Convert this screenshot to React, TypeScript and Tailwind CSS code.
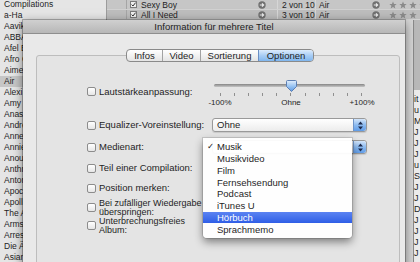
import React from "react";

const artists = [
  "Compilations",
  "a-Ha",
  "Aavikko",
  "ABBA",
  "Afel Bocoum",
  "Afro Celt Sound System",
  "Aimee Mann",
  "Air",
  "Alexi Murdoch",
  "Amy Macdonald",
  "Anastacia",
  "Andrea Bocelli",
  "Anne Clark",
  "Annie Lennox",
  "Anouk",
  "Anthrax",
  "Antony and the Johnsons",
  "Apocalyptica",
  "Apollo 440",
  "The Arcade Fire",
  "Arms and Sleepers",
  "Arrested Development",
  "Die Ärzte",
  "Asian Dub Foundation",
];

const menuItems = ["Musik", "Musikvideo", "Film", "Fernsehsendung", "Podcast", "iTunes U", "Hörbuch", "Sprachmemo"];
const sideLetters = ["it", "u", "M", "J", "J", "J", "u", "S", "J", "J", "D", "J", "J", "J", "J"];

function Checkbox() {
  return (
    <span className="block w-[9px] h-[9px] shrink-0 rounded-[2px] border border-[#8c8c8c] bg-gradient-to-b from-white to-[#e6e6e6]" />
  );
}

function SmallCheck() {
  return (
    <svg width="7" height="7" viewBox="0 0 7 7">
      <rect x="0.5" y="0.5" width="6" height="6" fill="#eeeeee" stroke="#7a7a7a" />
      <path d="M1.6 3.6 3 5 5.6 1.6" stroke="#333" strokeWidth="1" fill="none" />
    </svg>
  );
}

function GoArrow() {
  return (
    <svg width="8" height="8" viewBox="0 0 8 8" className="shrink-0">
      <circle cx="4" cy="4" r="3.7" fill="#707070" />
      <path d="M1.8 4h3.8M4 2.3 5.7 4 4 5.7" stroke="#ececec" strokeWidth="1.1" fill="none" />
    </svg>
  );
}

function Star() {
  return (
    <svg width="8" height="8" viewBox="0 0 10 10" className="shrink-0">
      <polygon points="5,0.5 6.3,3.6 9.6,3.8 7,6 7.9,9.4 5,7.5 2.1,9.4 3,6 0.4,3.8 3.7,3.6" fill="#8a8a8a" />
    </svg>
  );
}

function TrackRow({ name, num, stars, bg }: { name: string; num: string; stars: number; bg: string }) {
  return (
    <div className={`flex h-[10px] items-center text-[8.5px] leading-[10px] border-b border-[#d2d2d2] ${bg}`}>
      <div className="w-[20px] h-full border-r border-[#a5a5a5]" />
      <div className="w-[12px] flex justify-center">
        <SmallCheck />
      </div>
      <div className="w-[138px] flex items-center justify-between pl-[2px] pr-[11px]">
        <span>{name}</span>
        <GoArrow />
      </div>
      <div className="w-[38px] h-full border-l border-[#d6d6d6] pl-[4px]">{num}</div>
      <div className="w-[72px] h-full flex items-center justify-between border-l border-[#d6d6d6] pl-[3px] pr-[7px]">
        <span>Air</span>
        <GoArrow />
      </div>
      <div className="flex gap-[2px] pl-[2px]">
        {Array.from({ length: stars }).map((_, i) => (
          <Star key={i} />
        ))}
      </div>
    </div>
  );
}

function Stepper() {
  return (
    <div className="w-[13px] h-full flex items-center justify-center rounded-r-[3px] border-l border-[#6f94c8] bg-gradient-to-b from-[#d3e5fa] via-[#8dbbf0] to-[#5f9ce8]">
      <svg width="5" height="9" viewBox="0 0 5 9">
        <path d="M2.5 0.5 5 3.6H0z M0 5.4h5L2.5 8.5z" fill="#1c2a4c" />
      </svg>
    </div>
  );
}

function Popup({ value }: { value: string }) {
  return (
    <div className="w-[155px] h-[14px] flex items-center rounded-[3px] border border-[#999] bg-gradient-to-b from-white to-[#ececec] shadow-[0_1px_1px_rgba(0,0,0,0.12)]">
      <span className="flex-1 pl-[4px] leading-[12px]">{value}</span>
      <Stepper />
    </div>
  );
}

const tabs = [
  { label: "Infos", cls: "w-[35px]" },
  { label: "Video", cls: "w-[38px] border-l border-[#a2a2a2]" },
  { label: "Sortierung", cls: "w-[58px] border-l border-[#a2a2a2]" },
  {
    label: "Optionen",
    cls: "w-[55px] border-l border-[#6b8fc4] bg-gradient-to-b from-[#dcebfc] via-[#a8cdf5] to-[#80b6ee]",
  },
];

export default function App() {
  return (
    <div className="relative w-[420px] h-[262px] overflow-hidden bg-[#e4e4e4] font-['Liberation_Sans',Arial,sans-serif] text-[#1e1e1e]">
      {/* iTunes window behind */}
      <div className="flex h-full">
        <div className="w-[107px] shrink-0 border-r border-[#9c9c9c] bg-[#e5e5e5] overflow-hidden">
          <div className="-mt-[1px]">
            {artists.map((a) => (
              <div
                key={a}
                className={`h-[11px] pl-[4px] text-[8.5px] leading-[11px] whitespace-nowrap ${a === "Air" ? "bg-[#c6c6c6]" : ""}`}
              >
                {a}
              </div>
            ))}
          </div>
        </div>
        <div className="flex-1 flex flex-col bg-[#c4c4c4]">
          <TrackRow name="Sexy Boy" num="2 von 10" stars={5} bg="bg-[#c6c6c6]" />
          <TrackRow name="All I Need" num="3 von 10" stars={3} bg="bg-[#bdbdbd]" />
          <div className="flex-1 flex">
            <div className="w-[297px] bg-[#cfcfcf]" />
            <div className="w-[10px] bg-[#d6d6d6] border-r border-[#8a8a8a]" />
            <div className="flex-1 flex flex-col bg-[#ececec]">
              <div className="h-[70px] bg-[#b9b9b9]" />
              <div className="pt-[4px] text-[9px] leading-[11px] whitespace-nowrap">
                {sideLetters.map((l, i) => (
                  <div key={i} className="h-[11px]">
                    {l}
                  </div>
                ))}
              </div>
            </div>
          </div>
        </div>
      </div>

      {/* dialog window */}
      <div className="absolute left-[23px] top-[20px] w-[382px] h-[250px] bg-[#e9e9e9] shadow-[0_0_0_1px_rgba(0,0,0,0.25),0_3px_10px_rgba(0,0,0,0.5)] text-[9.5px]">
        <div className="h-[14px] bg-gradient-to-b from-[#d0d0d0] to-[#b7b7b7] border-b border-[#8e8e8e] text-center leading-[13px] text-[#222]">
          Information für mehrere Titel
        </div>
        <div className="pt-[15px]">
          <div className="relative z-10 ml-[13px] w-[364px] flex justify-center pl-[4px]">
            <div className="flex h-[13px] rounded-[4px] border border-[#8a8a8a] overflow-hidden bg-gradient-to-b from-white to-[#e4e4e4]">
              {tabs.map((t) => (
                <div key={t.label} className={`${t.cls} text-center leading-[11px]`}>
                  {t.label}
                </div>
              ))}
            </div>
          </div>
          <div className="-mt-[7px] ml-[13px] w-[364px] h-[220px] border border-[#bdbdbd] rounded-[3px] bg-[#e4e4e4] pt-[22px] pl-[50px]">
            {/* Lautstärke */}
            <div className="flex h-[36px]">
              <div className="w-[125px] h-[9px] mt-[9px] flex items-center gap-[3px]">
                <Checkbox />
                <span className="leading-[9px] whitespace-nowrap">Lautstärkeanpassung:</span>
              </div>
              <div className="w-[155px]">
                <div className="relative mt-[6px] mx-[2px] h-[3px] rounded-full bg-gradient-to-b from-[#858585] to-[#c6c6c6]">
                  <svg className="absolute left-[72px] -top-[4px]" width="11" height="12" viewBox="0 0 11 12">
                    <defs>
                      <linearGradient id="knob" x1="0" y1="0" x2="0" y2="1">
                        <stop offset="0" stopColor="#e2eefc" />
                        <stop offset="0.5" stopColor="#9cc6f3" />
                        <stop offset="1" stopColor="#5b98e2" />
                      </linearGradient>
                    </defs>
                    <path d="M1.5 0.5h8a1 1 0 0 1 1 1v5L5.5 11.5 0.5 6.5v-5a1 1 0 0 1 1-1z" fill="url(#knob)" stroke="#5d7fb3" />
                  </svg>
                </div>
                <div className="mt-[6px] h-[3px] flex justify-between pl-[8px] pr-[5px]">
                  {Array.from({ length: 11 }).map((_, i) => (
                    <span key={i} className="w-[1px] h-[3px] bg-[#8f8f8f]" />
                  ))}
                </div>
                <div className="mt-[2px] -ml-[7px] w-[172px] flex justify-between text-[8px] leading-[10px]">
                  <span className="w-[30px] text-center">-100%</span>
                  <span className="w-[30px] text-center">Ohne</span>
                  <span className="w-[30px] text-center">+100%</span>
                </div>
              </div>
            </div>

            {/* Equalizer */}
            <div className="mt-[4px] h-[14px] flex items-center">
              <div className="w-[125px] flex items-center gap-[3px]">
                <Checkbox />
                <span className="whitespace-nowrap">Equalizer-Voreinstellung:</span>
              </div>
              <Popup value="Ohne" />
            </div>

            {/* Medienart */}
            <div className="mt-[8px] h-[14px] flex items-center">
              <div className="w-[125px] flex items-center gap-[3px]">
                <Checkbox />
                <span className="whitespace-nowrap">Medienart:</span>
              </div>
              <Popup value="Musik" />
            </div>

            <div className="mt-[7px] h-[14px] flex items-center gap-[3px]">
              <Checkbox />
              <span className="whitespace-nowrap">Teil einer Compilation:</span>
            </div>

            <div className="mt-[6px] h-[14px] flex items-center gap-[3px]">
              <Checkbox />
              <span className="whitespace-nowrap">Position merken:</span>
            </div>

            <div className="mt-[3.5px] h-[18px] flex items-center gap-[3px]">
              <Checkbox />
              <span className="text-[9px] leading-[9px] whitespace-nowrap">
                Bei zufälliger Wiedergabe
                <br />
                überspringen:
              </span>
            </div>

            <div className="h-[18px] flex items-center gap-[3px]">
              <Checkbox />
              <span className="text-[9px] leading-[9px] whitespace-nowrap">
                Unterbrechungsfreies
                <br />
                Album:
              </span>
            </div>
          </div>
        </div>
      </div>

      {/* open pop-up menu */}
      <div className="absolute z-20 left-[203px] top-[138px] w-[149px] h-[100px] pt-[3px] bg-white/95 rounded-b-[4px] shadow-[0_0_0_1px_rgba(0,0,0,0.12),0_4px_9px_rgba(0,0,0,0.45)] text-[9.5px]">
        {menuItems.map((m) => (
          <div
            key={m}
            className={`h-[11.75px] flex items-center leading-[11px] ${
              m === "Hörbuch" ? "bg-gradient-to-b from-[#5b83f2] to-[#2f5ee6] text-white" : ""
            }`}
          >
            <span className="w-[14px] pl-[4px] font-['DejaVu_Sans',sans-serif] text-[8.5px]">{m === "Musik" ? "✓" : ""}</span>
            <span>{m}</span>
          </div>
        ))}
      </div>
    </div>
  );
}
